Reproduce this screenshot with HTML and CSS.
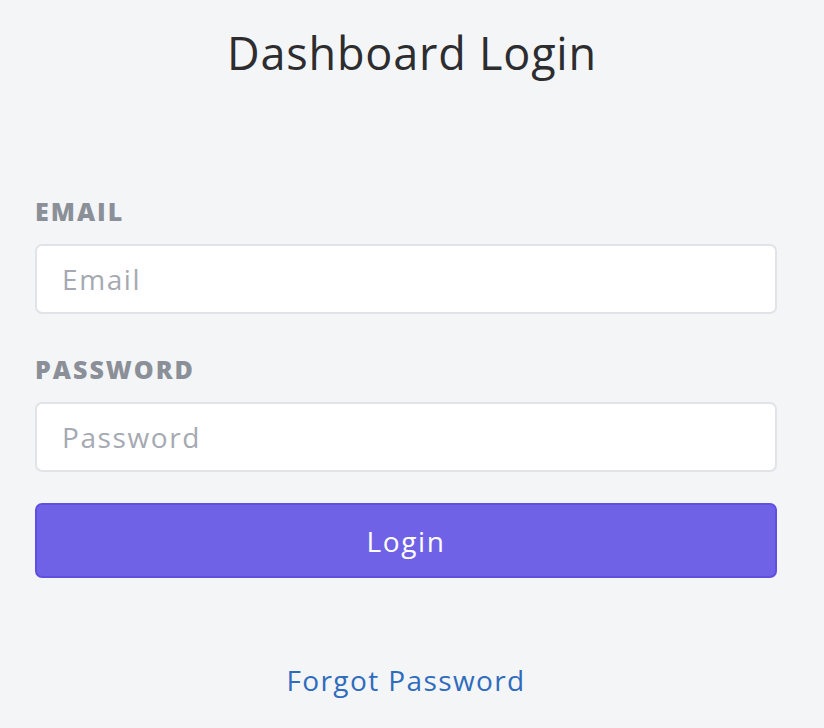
FILE: index.html
```html
<!DOCTYPE html>
<html>
<head>
<meta charset="utf-8">
<link rel="stylesheet" href="styles.css">
</head>
<body>
<div class="page">
  <h1 class="title">Dashboard Login</h1>
  <form class="form">
    <label class="label" for="email">EMAIL</label>
    <input class="input" id="email" type="text" placeholder="Email">
    <label class="label label-second" for="password">PASSWORD</label>
    <input class="input" id="password" type="password" placeholder="Password">
    <button class="button" type="button">Login</button>
  </form>
  <div class="links"><a class="link" href="#">Forgot Password</a></div>
</div>
</body>
</html>
```

FILE: styles.css
```css
html, body {
  margin: 0;
  padding: 0;
  background: #f4f5f7;
}
body {
  font-family: "Open Sans", "Noto Sans", sans-serif;
}
.page {
  padding: 24px 47px 0 35px;
  display: flex;
  flex-direction: column;
}
.title {
  margin: 0;
  text-align: center;
  font-size: 45px;
  line-height: 58px;
  font-weight: 500;
  color: #2d2d2f;
  padding-left: 12px;
  letter-spacing: 0.8px;
}
.form {
  display: flex;
  flex-direction: column;
  margin-top: 114px;
}
.label {
  font-size: 25px;
  line-height: 30px;
  font-weight: 800;
  color: #8b9098;
  letter-spacing: 2px;
  margin-bottom: 18px;
}
.label-second {
  margin-top: 40px;
}
.input {
  box-sizing: border-box;
  height: 70px;
  border: 2px solid #e2e3e8;
  border-radius: 7px;
  background: #fff;
  padding: 0 25px;
  font-family: inherit;
  font-size: 28px;
  letter-spacing: 1.6px;
  color: #333;
  outline: none;
}
.input::placeholder {
  color: #a5a9b2;
}
.button {
  box-sizing: border-box;
  margin-top: 31px;
  height: 75px;
  border: 2px solid #5f50e0;
  border-radius: 7px;
  background: #7062e6;
  color: #fff;
  font-family: inherit;
  font-size: 28px;
  font-weight: 500;
  letter-spacing: 1.6px;
}
.links {
  text-align: center;
  margin-top: 84px;
}
.link {
  color: #2f6cbd;
  text-decoration: none;
  font-size: 28px;
  line-height: 36px;
  letter-spacing: 1.4px;
}
```
